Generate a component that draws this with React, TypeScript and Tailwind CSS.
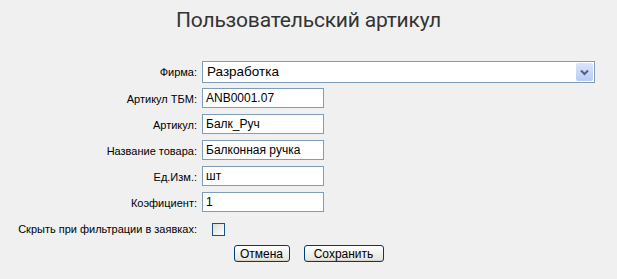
import React from 'react';

const FIELDS: { label: string; value: string }[] = [
    { label: 'Артикул ТБМ:', value: 'ANB0001.07' },
    { label: 'Артикул:', value: 'Балк_Руч' },
    { label: 'Название товара:', value: 'Балконная ручка' },
    { label: 'Ед.Изм.:', value: 'шт' },
    { label: 'Коэфициент:', value: '1' },
];

const XpButton: React.FC<{ text: string; className?: string }> = ({ text, className = '' }) => (
    <button
        className={`h-[17px] rounded-[3px] border border-[#003c74] bg-gradient-to-b from-white to-[#e3e3dc] text-[12px] leading-none text-black shadow-[inset_0_-1px_0_#d6d0c5] ${className}`}
    >
        {text}
    </button>
);

const App: React.FC = () => {
    return (
        <div className="w-[617px] h-[279px] bg-[#f0f0f0] font-['Liberation_Sans',sans-serif] text-[11px] text-black">
            <h1 className="pt-[5px] h-[55px] text-center text-[21px] text-[#333] font-['Roboto',sans-serif] tracking-[-0.2px]">
                Пользовательский артикул
            </h1>

            <div className="grid grid-cols-[197px_1fr] gap-x-[5px] pr-[22px] mt-[6px]">
                <div className="h-[22px] flex items-center justify-end">Фирма:</div>
                <div className="h-[22px] flex items-center border border-[#7f9db9] bg-white pl-[4px] pr-[1px]">
                    <span className="flex-1 text-[13.5px]">Разработка</span>
                    <span className="w-[17px] h-[18px] rounded-[2px] bg-gradient-to-b from-[#dbe5fb] to-[#b9cbf3] flex items-center justify-center">
                        <svg width="9" height="7" viewBox="0 0 9 7">
                            <path d="M1 1.5 L4.5 5 L8 1.5" stroke="#4d6185" strokeWidth="2" fill="none" />
                        </svg>
                    </span>
                </div>

                <div className="col-span-2 h-[5px]" />

                {FIELDS.map((f) => (
                    <React.Fragment key={f.label}>
                        <div className="h-[26px] flex items-start pt-[3px] justify-end">{f.label}</div>
                        <div className="h-[26px]">
                            <div className="w-[122px] h-[20px] border border-[#7f9db9] bg-white pl-[3px] text-[12px] flex items-center">
                                {f.value}
                            </div>
                        </div>
                    </React.Fragment>
                ))}

                <div className="h-[22px] flex items-center justify-end">Скрыть при фильтрации в заявках:</div>
                <div className="h-[22px] flex items-center pl-[10px]">
                    <span className="w-[13px] h-[13px] border border-[#1c5180] bg-gradient-to-br from-[#dcdcd7] to-white" />
                </div>
            </div>

            <div className="flex justify-center gap-[14px] mt-[5px]">
                <XpButton text="Отмена" className="w-[56px]" />
                <XpButton text="Сохранить" className="w-[80px]" />
            </div>
        </div>
    );
};

export default App;
